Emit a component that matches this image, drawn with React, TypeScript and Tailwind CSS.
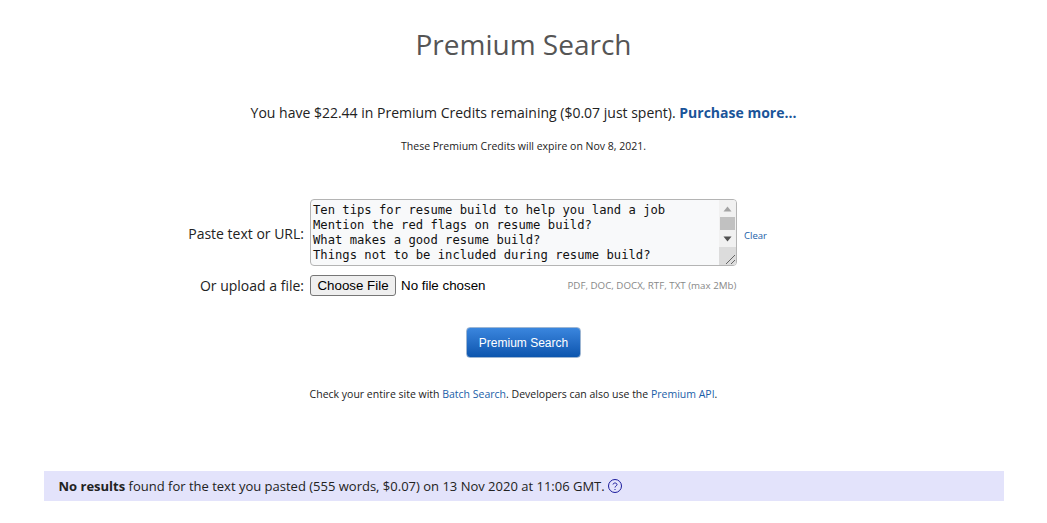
import React from "react";

const lines = [
  "Ten tips for resume build to help you land a job",
  "Mention the red flags on resume build?",
  "What makes a good resume build?",
  "Things not to be included during resume build?",
];

const PasteBox = () => {
  return (
    <div className="flex h-[67px] w-[427px] overflow-hidden rounded-[4px] border border-[#b4b4b4] bg-[#f8f9fa]">
      <div className="flex-1 pl-[2px] pt-[3px] font-['DejaVu_Sans_Mono',monospace] text-[12.2px] leading-[15px] text-[#111]">
        {lines.map((line, idx) => (
          <div key={idx} className="whitespace-pre">
            {line}
          </div>
        ))}
      </div>
      <div className="flex w-[17px] flex-col bg-[#f1f1f1]">
        <div className="flex h-[17px] items-center justify-center">
          <svg width="9" height="6" viewBox="0 0 9 6">
            <path d="M4.5 0.5 L8.5 5.5 H0.5 Z" fill="#a3a3a3" />
          </svg>
        </div>
        <div className="mx-[1px] h-[13px] bg-[#c1c1c1]" />
        <div className="flex h-[17px] items-center justify-center">
          <svg width="9" height="6" viewBox="0 0 9 6">
            <path d="M0.5 0.5 H8.5 L4.5 5.5 Z" fill="#505050" />
          </svg>
        </div>
        <div className="flex-1 bg-[#dcdcdc]" />
        <div className="flex h-[17px] items-end justify-end bg-[#dcdcdc]">
          <svg width="11" height="11" viewBox="0 0 11 11">
            <path d="M1 10 L10 1 M6 10 L10 6" stroke="#666" strokeWidth="1" fill="none" />
          </svg>
        </div>
      </div>
    </div>
  );
};

const App = () => {
  return (
    <div className="h-[523px] w-[1047px] overflow-hidden bg-white font-['Open_Sans',sans-serif] text-[#222]">
      <div className="flex flex-col items-center">
        <h1 className="mt-[24px] text-[28px] leading-[40px] text-[#555]">Premium Search</h1>

        <p className="mt-[39px] text-[14px] leading-[20px]">
          You have $22.44 in Premium Credits remaining ($0.07 just spent).{" "}
          <a className="font-bold text-[#1a5499]">Purchase more...</a>
        </p>

        <p className="mt-[15px] text-[10.5px] leading-[16px]">These Premium Credits will expire on Nov 8, 2021.</p>

        <div className="mt-[45px] flex w-full items-center">
          <div className="mt-[2px] w-[304px] pr-0 text-right text-[14px] leading-[20px]">Paste text or URL:</div>
          <div className="ml-[6px]">
            <PasteBox />
          </div>
          <a className="ml-[7px] mt-[8px] text-[9.5px] text-[#1a5ea8]">Clear</a>
        </div>

        <div className="mt-[9px] flex w-full items-center">
          <div className="w-[304px] text-right text-[14px] leading-[20px]">Or upload a file:</div>
          <button className="ml-[6px] h-[21px] w-[86px] rounded-[3px] border border-[#767676] bg-[#efefef] font-['Liberation_Sans',sans-serif] text-[13.33px] leading-[17px] text-black">
            Choose File
          </button>
          <span className="ml-[5px] font-['Liberation_Sans',sans-serif] text-[13.33px] text-black">No file chosen</span>
          <span className="ml-[82px] mt-[2px] text-[9.75px] text-[#888]">PDF, DOC, DOCX, RTF, TXT (max 2Mb)</span>
        </div>

        <button className="mt-[31px] h-[31px] w-[115px] rounded-[4px] border border-[#9db6d3] bg-gradient-to-b from-[#3a86de] to-[#0b55ae] font-['Liberation_Sans',sans-serif] text-[12px] text-white">
          Premium Search
        </button>

        <p className="mt-[28px] pr-[20px] text-[10.5px] leading-[16px]">
          Check your entire site with <a className="text-[#1a5ea8]">Batch Search</a>. Developers can also use the{" "}
          <a className="text-[#1a5ea8]">Premium API</a>.
        </p>

        <div className="mt-[69px] flex h-[30px] w-[960px] items-center bg-[#e3e3fb] pl-[15px] text-[13px]">
          <span className="pt-[2px]">
            <b>No results</b> found for the text you pasted (555 words, $0.07) on 13 Nov 2020 at 11:06 GMT.
          </span>
          <svg className="ml-[3px]" width="14" height="14" viewBox="0 0 14 14">
            <circle cx="7" cy="7" r="6.5" fill="none" stroke="#1a1a9c" strokeWidth="1" />
            <path d="M5 5.5 C5 3.5 9 3.5 9 5.5 C9 7 7 7 7 8.5 M7 10 V11" fill="none" stroke="#1a1a9c" strokeWidth="1" />
          </svg>
        </div>
      </div>
    </div>
  );
};

export default App;
